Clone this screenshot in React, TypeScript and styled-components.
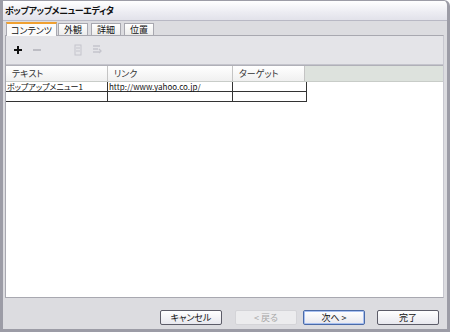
import React from "react";
import styled, { createGlobalStyle } from "styled-components";

const GlobalStyle = createGlobalStyle`
  html, body {
    margin: 0;
    padding: 0;
    background: #ffffff;
  }
  body {
    font-family: "Noto Sans CJK JP", "DejaVu Sans", sans-serif;
    font-size: 9px;
    font-feature-settings: "palt";
    color: #111;
  }
`;

const Window = styled.div`
  width: 450px;
  height: 332px;
  box-sizing: border-box;
  display: flex;
  flex-direction: column;
  background: #dcdce0;
  border: 1px solid #9c9ca6;
  border-left-width: 3px;
  border-right-width: 3px;
  border-bottom-width: 3px;
  border-top-right-radius: 6px;
  overflow: hidden;
`;

const TitleBar = styled.div`
  height: 19px;
  flex: none;
  display: flex;
  align-items: center;
  padding-left: 2px;
  font-weight: bold;
  font-size: 9px;
  letter-spacing: -0.4px;
  background: linear-gradient(#ffffff, #ececf2 60%, #e2e2ea);
  border-bottom: 1px solid #b8b8c4;
`;

const Body = styled.div`
  flex: 1;
  display: flex;
  flex-direction: column;
  padding: 0 3px 0 2px;
`;

const TabStrip = styled.div`
  height: 14px;
  flex: none;
  display: flex;
  align-items: flex-end;
  padding-left: 1px;
`;

const Tab = styled.div<{ $active?: boolean }>`
  height: ${({ $active }) => ($active ? "14px" : "12px")};
  box-sizing: border-box;
  display: flex;
  align-items: center;
  padding: 0 ${({ $active }) => ($active ? "4px" : "5px")};
  margin-right: ${({ $active }) => ($active ? "1px" : "3px")};
  font-size: 9px;
  background: ${({ $active }) => ($active ? "#fbfbfb" : "linear-gradient(#ffffff, #ececec)")};
  border: 1px solid #a8a8b0;
  border-bottom: none;
  border-top: ${({ $active }) => ($active ? "2px solid #f0a030" : "1px solid #a8a8b0")};
  position: relative;
  z-index: ${({ $active }) => ($active ? 1 : 0)};
  margin-bottom: ${({ $active }) => ($active ? "-1px" : "0")};
`;

const Panel = styled.div`
  flex: 1;
  display: flex;
  flex-direction: column;
  background: #e4e4e8;
  border: 1px solid #a8a8b0;
  border-right-color: #c8c8d0;
`;

const Toolbar = styled.div`
  height: 28px;
  flex: none;
  display: flex;
  align-items: center;
  padding-left: 5px;
  gap: 5px;
  border-bottom: 1px solid #c4c4cc;
`;

const ToolButton = styled.div<{ $gapLeft?: number }>`
  width: 14px;
  height: 14px;
  display: flex;
  align-items: center;
  justify-content: center;
  margin-left: ${({ $gapLeft }) => $gapLeft ?? 0}px;
`;

const GridArea = styled.div`
  flex: 1;
  background: #ffffff;
  border-top: 1px solid #b0b0b8;
  display: flex;
  flex-direction: column;
`;

const HeaderRow = styled.div`
  height: 15px;
  display: flex;
  background: #dde2dd;
  border-bottom: 1px solid #c8ccc8;
`;

const HeaderCell = styled.div<{ $w: number }>`
  width: ${({ $w }) => $w}px;
  box-sizing: border-box;
  display: flex;
  align-items: center;
  padding-left: 6px;
  background: linear-gradient(#ffffff, #f0f0f0);
  border-right: 1px solid #c4c4c4;
  color: #333;
`;

const Row = styled.div`
  height: 9px;
  display: flex;
  width: 300px;
  border-bottom: 1px solid #333;
  border-right: 1px solid #333;
`;

const Cell = styled.div<{ $w: number }>`
  width: ${({ $w }) => $w}px;
  box-sizing: border-box;
  display: flex;
  align-items: center;
  padding-left: 1px;
  border-right: 1px solid #333;
  font-size: 8px;
  line-height: 9px;
  white-space: nowrap;
  &:last-child {
    border-right: none;
  }
`;

const Footer = styled.div`
  height: 31px;
  flex: none;
  display: flex;
  align-items: flex-start;
  justify-content: flex-end;
  padding-right: 5px;
  padding-top: 12px;
  box-sizing: border-box;
`;

const Button = styled.div<{ $disabled?: boolean; $focused?: boolean; $gap: number }>`
  width: 62px;
  height: 15px;
  box-sizing: border-box;
  display: flex;
  align-items: center;
  justify-content: center;
  margin-right: ${({ $gap }) => $gap}px;
  color: ${({ $disabled }) => ($disabled ? "#a8a8a8" : "#111")};
  border: 1px solid ${({ $disabled, $focused }) => ($disabled ? "#d4d4d8" : $focused ? "#4a6aa8" : "#5c5c68")};
  border-radius: 2px;
  background: ${({ $disabled }) => ($disabled ? "#ececee" : "linear-gradient(#ffffff, #e8e8ee)")};
  box-shadow: ${({ $focused }) => ($focused ? "inset 0 0 0 1px #a8c0f0" : "none")};
`;

const Plus = () => (
  <svg width="10" height="10" viewBox="0 0 10 10">
    <path d="M5 1v8M1 5h8" stroke="#111" strokeWidth="2" />
  </svg>
);

const Minus = () => (
  <svg width="10" height="10" viewBox="0 0 10 10">
    <path d="M1 5h8" stroke="#b0b0b8" strokeWidth="1.5" />
  </svg>
);

const UpIcon = () => (
  <svg width="10" height="12" viewBox="0 0 10 12">
    <rect x="2" y="1" width="6" height="10" fill="none" stroke="#c4c4cc" />
    <path d="M3 4h4M3 7h4" stroke="#c4c4cc" />
  </svg>
);

const DownIcon = () => (
  <svg width="12" height="12" viewBox="0 0 12 12">
    <path d="M2 2h7M2 5h5M2 8h7M8 5l2 2-2 2" fill="none" stroke="#c4c4cc" strokeWidth="1.3" />
  </svg>
);

const columns = [102, 125, 72];

export default function App() {
  return (
    <>
      <GlobalStyle />
      <Window>
        <TitleBar>ポップアップメニューエディタ</TitleBar>
        <Body>
          <TabStrip>
            <Tab $active>コンテンツ</Tab>
            <Tab>外観</Tab>
            <Tab>詳細</Tab>
            <Tab>位置</Tab>
          </TabStrip>
          <Panel>
            <Toolbar>
              <ToolButton><Plus /></ToolButton>
              <ToolButton><Minus /></ToolButton>
              <ToolButton $gapLeft={22}><UpIcon /></ToolButton>
              <ToolButton><DownIcon /></ToolButton>
            </Toolbar>
            <GridArea>
              <HeaderRow>
                <HeaderCell $w={columns[0]}>テキスト</HeaderCell>
                <HeaderCell $w={columns[1]}>リンク</HeaderCell>
                <HeaderCell $w={columns[2]}>ターゲット</HeaderCell>
              </HeaderRow>
              <Row>
                <Cell $w={columns[0]}>ポップアップメニュー1</Cell>
                <Cell $w={columns[1]}>http://www.yahoo.co.jp/</Cell>
                <Cell $w={columns[2]} />
              </Row>
              <Row>
                <Cell $w={columns[0]} />
                <Cell $w={columns[1]} />
                <Cell $w={columns[2]} />
              </Row>
            </GridArea>
          </Panel>
          <Footer>
            <Button $gap={13}>キャンセル</Button>
            <Button $gap={6} $disabled>&lt; 戻る</Button>
            <Button $gap={12} $focused>次へ &gt;</Button>
            <Button $gap={0}>完了</Button>
          </Footer>
        </Body>
      </Window>
    </>
  );
}
